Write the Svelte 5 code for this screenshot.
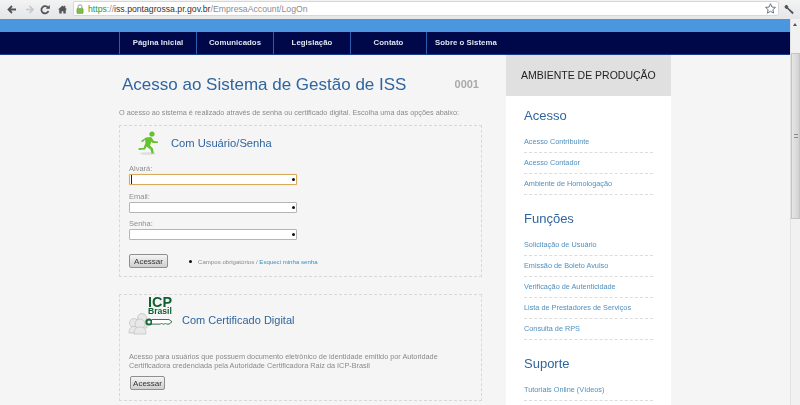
<script>
  const fields = [
    { label: 'Alvará:', focus: true },
    { label: 'Email:', focus: false },
    { label: 'Senha:', focus: false }
  ];
  const groups = [
    { title: 'Acesso', links: ['Acesso Contribuinte', 'Acesso Contador', 'Ambiente de Homologação'] },
    { title: 'Funções', links: ['Solicitação de Usuário', 'Emissão de Boleto Avulso', 'Verificação de Autenticidade', 'Lista de Prestadores de Serviços', 'Consulta de RPS'] },
    { title: 'Suporte', links: ['Tutoriais Online (Vídeos)'] }
  ];
  const nav = ['Página Inicial', 'Comunicados', 'Legislação', 'Contato', 'Sobre o Sistema'];
</script>

<div class="window">
  <header class="toolbar">
    <div class="tools">
      <svg class="t-back" width="9" height="9" viewBox="0 0 9 9"><path d="M9 4.500H2.500M5 1 1.500 4.500 5 8" fill="none" stroke="#555" stroke-width="1.800"/></svg>
      <svg class="t-fwd" width="8" height="9" viewBox="0 0 8 9"><path d="M0 4.500H6M3.500 1 7 4.500 3.500 8" fill="none" stroke="#c4c8cc" stroke-width="1.600"/></svg>
      <svg class="t-rel" width="10" height="10" viewBox="0 0 10 10"><path d="M8 2.800A3.600 3.600 0 1 0 8.400 6" fill="none" stroke="#555" stroke-width="1.800"/><path d="M5.800 3.800H9.800V0Z" fill="#555"/></svg>
      <svg class="t-home" width="9" height="9" viewBox="0 0 11 10"><path d="M5.500 0 0 5h1.500v5h3V7h2v3h3V5H11L9 3V.5H7.500v1Z" fill="#555"/></svg>
    </div>
    <div class="url">
      <svg class="lock" width="8" height="10" viewBox="0 0 9 11"><path d="M2.300 5V3a2.200 2.200 0 0 1 4.400 0v2" fill="none" stroke="#888" stroke-width="1"/><rect x="1" y="5" width="7" height="5.500" rx=".5" fill="#7cbd4e" stroke="#5c9a35" stroke-width=".6"/></svg>
      <span class="addr"><span class="https">https</span><span class="rest">://</span><span class="host">iss.pontagrossa.pr.gov.br</span><span class="rest">/EmpresaAccount/LogOn</span></span>
      <svg class="star" width="11" height="11" viewBox="0 0 12 12"><path d="M6 .8 7.600 4.400 11.400 4.800 8.600 7.300 9.400 11 6 9.100 2.600 11 3.400 7.300.6 4.800 4.400 4.400Z" fill="#fff" stroke="#5d6b78" stroke-width="1"/></svg>
    </div>
    <svg class="wrench" width="11" height="11" viewBox="0 0 13 12"><path d="M1 1.500 3 .5 5 2.200 5 4l6.500 5.500-1.500 2L4 5.500 2.500 5.400.6 3.400Z" fill="#555"/></svg>
  </header>

  <div class="viewport">
    <div class="page">
      <div class="strip"></div>
      <nav class="nav">
        <ul>
          {#each nav as item}<li>{item}</li>{/each}
        </ul>
      </nav>
      <div class="columns">
        <main class="main">
          <div class="headline">
            <h1>Acesso ao Sistema de Gestão de ISS</h1>
            <span class="code">0001</span>
          </div>
          <p class="intro">O acesso ao sistema é realizado através de senha ou certificado digital. Escolha uma das opções abaixo:</p>

          <section class="box login">
            <div class="box-head">
              <svg class="runner" width="22" height="24" viewBox="0 0 22 24">
                <ellipse cx="11" cy="22.500" rx="8" ry="1.300" fill="#ddd"/>
                <circle cx="15" cy="3" r="2.600" fill="#66c22e"/>
                <path d="M9 6.500 14 6 17 10l4 .5v1.600L15.500 12l-1-1.500-1.500 4 3 3 .8 5h-2.300l-1-4-4-3L8 18.500 1.500 19l.3-2H6.500l2-5-.5-3.500L6 11 3.600 10.300Z" fill="#66c22e"/>
              </svg>
              <h2>Com Usuário/Senha</h2>
            </div>
            <form class="fields">
              {#each fields as f}
                <div class="field">
                  <span class="label">{f.label}</span>
                  <div class="input" class:focus={f.focus}>
                    {#if f.focus}<i class="caret"></i>{/if}
                    <b class="dot"></b>
                  </div>
                </div>
              {/each}
            </form>
            <div class="actions">
              <button type="button" class="btn">Acessar</button>
              <b class="dot req"></b>
              <span class="note">Campos obrigatórios / <a href="#top">Esqueci minha senha</a></span>
            </div>
          </section>

          <section class="box cert">
            <div class="box-head cert-head">
              <svg class="icp" width="46" height="43" viewBox="0 -3 46 43">
                <text x="20" y="10" class="icp-a">ICP</text>
                <text x="20" y="17" class="icp-b">Brasil</text>
                <g fill="#e8e8e8" stroke="#bdbdbd" stroke-width=".7">
                  <circle cx="6" cy="26" r="4.500"/><path d="M1 36c0-5 2-6.500 5-6.500s5 1.500 5 6.500Z"/>
                  <circle cx="14" cy="21" r="4.500"/><path d="M9 31c0-5 2-6.500 5-6.500s5 1.500 5 6.500Z"/>
                  <circle cx="12" cy="27" r="5"/><path d="M6 37c0-5.500 2.500-7 6-7s6 1.500 6 7Z"/>
                </g>
                <circle cx="21" cy="25" r="2.600" fill="#fff" stroke="#176b3c" stroke-width="2"/>
                <path d="M24 22.500h17l3 2.300-3 2.300h-2.500l-1-1-1 1h-2l-1-1-1 1H24" fill="#fff" stroke="#176b3c" stroke-width=".9"/>
              </svg>
              <h2>Com Certificado Digital</h2>
            </div>
            <p class="desc">Acesso para usuários que possuem documento eletrônico de identidade emitido por Autoridade Certificadora credenciada pela Autoridade Certificadora Raiz da ICP-Brasil</p>
            <button type="button" class="btn btn2">Acessar</button>
          </section>
        </main>

        <aside class="side">
          <div class="env">AMBIENTE DE PRODUÇÃO</div>
          <div class="side-body">
            {#each groups as g}
              <h3>{g.title}</h3>
              <ul>
                {#each g.links as l}<li>{l}</li>{/each}
              </ul>
            {/each}
          </div>
        </aside>
      </div>
    </div>
    <div class="scrollbar">
      <span class="up"></span>
      <div class="thumb"><i></i></div>
    </div>
  </div>
</div>

<style>
  :global(body) { margin: 0; background: #f5f5f5; font-family: "Liberation Sans", Arial, sans-serif; overflow: hidden; }
  .window { width: 800px; height: 405px; overflow: hidden; display: flex; flex-direction: column; filter: blur(.3px); }
  .toolbar { height: 19px; flex: none; display: flex; align-items: center; background: linear-gradient(#f3f3f3, #e4e6e8); box-sizing: border-box; }
  .tools { width: 73px; flex: none; display: flex; align-items: center; padding-left: 7px; box-sizing: border-box; }
  .t-fwd { margin-left: 10px; }
  .t-rel { margin-left: 6px; }
  .t-home { margin-left: 8px; }
  .url { width: 706px; flex: none; height: 15px; margin-top: -2px; background: #fff; border: 1px solid #d5d7da; border-radius: 2px; box-sizing: border-box; display: flex; align-items: center; padding: 0 2px; gap: 4px; }
  .lock { flex: none; }
  .addr { font-size: 8.700px; white-space: nowrap; flex: 1; }
  .https { color: #2e9a2a; }
  .rest { color: #8c8c8c; }
  .host { color: #333; }
  .star { flex: none; }
  .wrench { margin-left: 5px; }
  .viewport { flex: 1; display: flex; min-height: 0; }
  .page { width: 790px; flex: none; }
  .strip { height: 13px; background: #4a97e0; }
  .nav { height: 23px; background: #00084a; box-sizing: border-box; border-bottom: 1px solid #1a3a8a; padding-left: 119px; }
  .nav ul { list-style: none; margin: 0; padding: 0; display: flex; height: 100%; }
  .nav li { width: 77px; box-sizing: border-box; border-left: 1px solid #2f5cb0; color: #dfe3ee; font-size: 7.800px; font-weight: bold; letter-spacing: .05px; line-height: 22px; text-align: center; white-space: nowrap; }
  .nav li:nth-child(4) { width: 76px; }
  .nav li:last-child { width: auto; padding: 0 8px; }
  .columns { display: flex; padding-left: 119px; gap: 24px; align-items: flex-start; }
  .main { width: 363px; flex: none; }
  .headline { display: flex; justify-content: space-between; align-items: flex-start; padding: 19px 3px 0 3px; height: 52px; box-sizing: border-box; }
  h1 { margin: 0; font-weight: normal; font-size: 17px; line-height: 22px; color: #2f659f; white-space: nowrap; }
  .code { font-size: 11px; font-weight: bold; color: #a9a9a9; line-height: 20px; margin-top: 0; }
  .intro { margin: 0 0 7px; font-size: 7.280px; line-height: 11px; color: #8a8a8a; white-space: nowrap; }
  .box { border: 1px dashed #d8d8d8; box-sizing: border-box; padding-left: 9px; }
  .login { height: 152px; margin-bottom: 17px; }
  .cert { height: 107px; }
  .box-head { display: flex; align-items: center; }
  .login .box-head { height: 34px; padding-left: 8px; gap: 12px; }
  .runner { flex: none; }
  h2 { margin: 0; font-weight: normal; font-size: 11.200px; color: #2f659f; white-space: nowrap; }
  .fields { display: flex; flex-direction: column; gap: 6.500px; margin-top: 4px; }
  .field { display: flex; flex-direction: column; }
  .label { font-size: 7.500px; line-height: 9px; color: #8f8f8f; margin-bottom: 1px; }
  .input { width: 168px; height: 11px; box-sizing: border-box; background: #fff; border: 1px solid #b5b5b5; border-radius: 1px; position: relative; display: flex; align-items: center; justify-content: flex-end; padding-right: 1px; }
  .input.focus { border-color: #d9a95c; box-shadow: 0 0 1px #e5b96b; }
  .caret { position: absolute; left: 1px; top: 0; width: 1px; height: 9px; background: #222; }
  .dot { display: block; width: 3px; height: 3px; border-radius: 50%; background: #111; }
  .actions { display: flex; align-items: center; margin-top: 14px; }
  .btn { font: 8px "Liberation Sans", Arial, sans-serif; color: #333; height: 14px; width: 39px; padding: 0; border: 1px solid #8f8f8f; border-radius: 2px; background: linear-gradient(#f4f4f4, #cfcfcf); }
  .req { margin-left: 21px; }
  .note { font-size: 6.100px; color: #8a8a8a; margin-left: 6px; white-space: nowrap; }
  .note a { color: #3f8ec0; text-decoration: none; }
  .cert-head { height: 44px; margin-top: 3px; margin-left: -1px; gap: 8px; align-items: flex-start; }
  .cert-head h2 { margin-top: 16px; font-size: 11px; }
  .icp { flex: none; margin-top: -4px; }
  .icp-a { font: bold 14.400px "Liberation Sans", Arial, sans-serif; fill: #0f5f30; }
  .icp-b { font: bold 8.600px "Liberation Sans", Arial, sans-serif; fill: #0f5f30; }
  .desc { margin: 10px 0 0; width: 320px; font-size: 7.300px; line-height: 9px; color: #8a8a8a; }
  .btn2 { width: 35px; height: 14px; margin: 6px 0 0 1px; }
  .side { width: 165px; flex: none; background: #fff; }
  .env { height: 41px; background: #e0e0e0; color: #222; font-size: 10.500px; line-height: 41px; padding-left: 15px; white-space: nowrap; }
  .side-body { padding: 11px 18px 0; }
  h3 { margin: 0 0 7px; font-weight: normal; font-size: 13px; line-height: 18px; color: #2f659f; }
  .side ul { list-style: none; margin: 0 0 15px; padding: 0; }
  .side li { height: 21px; box-sizing: border-box; border-bottom: 1px dashed #dcdcdc; font-size: 7.300px; line-height: 20px; color: #4f90c0; white-space: nowrap; }
  .scrollbar { width: 10px; flex: none; background: #f1f1f1; border-left: 1px solid #e2e2e2; box-sizing: border-box; position: relative; }
  .up { position: absolute; left: 2px; top: 4px; border: 2.500px solid transparent; border-bottom: 3px solid #555; border-top: 0; }
  .thumb { position: absolute; left: 0; right: 0; top: 34px; height: 166px; background: linear-gradient(90deg, #e6e6e6, #d2d2d2); border: 1px solid #c4c4c4; box-sizing: border-box; display: flex; align-items: center; justify-content: center; }
  .thumb i { width: 4px; height: 4px; border-top: 1px solid #888; border-bottom: 1px solid #888; box-sizing: border-box; }
</style>
